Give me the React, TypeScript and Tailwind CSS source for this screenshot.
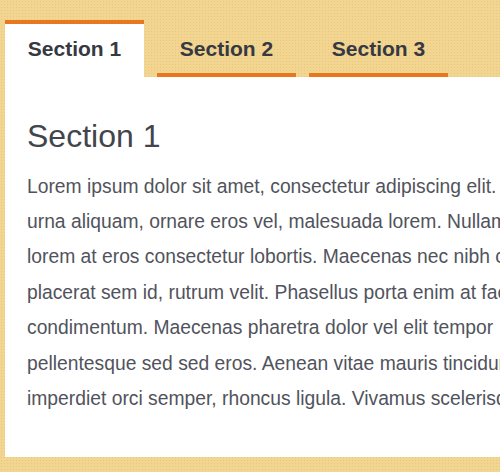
import React from "react";

const lines = [
  "Lorem ipsum dolor sit amet, consectetur adipiscing elit. Aenean nec",
  "urna aliquam, ornare eros vel, malesuada lorem. Nullam faucibus",
  "lorem at eros consectetur lobortis. Maecenas nec nibh congue,",
  "placerat sem id, rutrum velit. Phasellus porta enim at facilisis",
  "condimentum. Maecenas pharetra dolor vel elit tempor",
  "pellentesque sed sed eros. Aenean vitae mauris tincidunt,",
  "imperdiet orci semper, rhoncus ligula. Vivamus scelerisque",
];

export default function App() {
  const font = { fontFamily: '"Liberation Sans", Arial, sans-serif' };
  return (
    <div
      className="w-[500px] h-[472px] overflow-hidden bg-[#f1d591] bg-[image:radial-gradient(#e8c87e_0.6px,transparent_0.8px)] bg-[size:3px_3px] pt-[20px] pl-[5px]"
      style={font}
    >
      <div className="flex gap-[13px]">
        <div className="w-[139px] h-[57px] bg-white border-t-4 border-b-4 border-t-[#e8781f] border-b-white flex justify-center pt-[13.5px]">
          <span className="text-[21px] leading-[21px] font-bold text-[#363842]">Section 1</span>
        </div>
        <div className="w-[139px] h-[57px] border-t-4 border-b-4 border-t-transparent border-b-[#e8781f] flex justify-center pt-[13.5px]">
          <span className="text-[21px] leading-[21px] font-bold text-[#363842]">Section 2</span>
        </div>
        <div className="w-[139px] h-[57px] border-t-4 border-b-4 border-t-transparent border-b-[#e8781f] flex justify-center pt-[13.5px]">
          <span className="text-[21px] leading-[21px] font-bold text-[#363842]">Section 3</span>
        </div>
      </div>
      <div className="w-[600px] h-[380px] bg-white pt-[43px] pl-[22px]">
        <h2 className="text-[32px] leading-[32px] font-normal text-[#43454d]">Section 1</h2>
        <div className="mt-[16.6px] text-[19.3px] leading-[35.4px] text-[#51535c]">
          {lines.map((l, i) => (
            <div key={i} className="whitespace-nowrap">
              {l}
            </div>
          ))}
        </div>
      </div>
    </div>
  );
}
